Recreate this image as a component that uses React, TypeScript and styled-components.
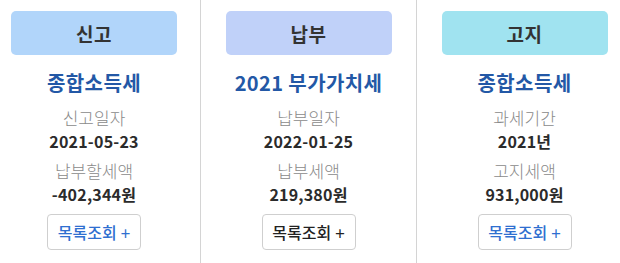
import { FunctionComponent } from "react";
import styled, { createGlobalStyle } from "styled-components";

const GlobalStyle = createGlobalStyle`
  html, body {
    margin: 0;
    padding: 0;
    background: #ffffff;
    overflow: hidden;
  }
  body {
    font-family: "Noto Sans CJK KR", "Noto Sans", sans-serif;
  }
`;

type Item = {
  tag: string;
  tagColor: string;
  title: string;
  dateLabel: string;
  dateValue: string;
  amountLabel: string;
  amountValue: string;
  linkColor: string;
  width: number;
};

const items: Item[] = [
  {
    tag: "신고",
    tagColor: "#b1d5fa",
    title: "종합소득세",
    dateLabel: "신고일자",
    dateValue: "2021-05-23",
    amountLabel: "납부할세액",
    amountValue: "-402,344원",
    linkColor: "#2f6fd0",
    width: 213,
  },
  {
    tag: "납부",
    tagColor: "#c0d1f9",
    title: "2021 부가가치세",
    dateLabel: "납부일자",
    dateValue: "2022-01-25",
    amountLabel: "납부세액",
    amountValue: "219,380원",
    linkColor: "#222222",
    width: 216,
  },
  {
    tag: "고지",
    tagColor: "#a0e3f0",
    title: "종합소득세",
    dateLabel: "과세기간",
    dateValue: "2021년",
    amountLabel: "고지세액",
    amountValue: "931,000원",
    linkColor: "#2f6fd0",
    width: 216,
  },
];

const Track = styled.div`
  display: flex;
  flex-direction: row;
  align-items: stretch;
  height: 263px;
  margin-left: -12px;
`;

const Column = styled.div<{ $width: number }>`
  flex: 0 0 ${(p) => p.$width}px;
  box-sizing: border-box;
  border-right: 1px solid #d4d4d4;
  display: flex;
  flex-direction: column;
  align-items: center;
  padding-top: 11px;
`;

const Tag = styled.div<{ $bg: string }>`
  width: 166px;
  height: 44px;
  border-radius: 5px;
  background: ${(p) => p.$bg};
  display: flex;
  align-items: center;
  justify-content: center;
  font-size: 19px;
  font-weight: 700;
  color: #333333;
  letter-spacing: 0.5px;
`;

const Title = styled.div`
  margin-top: 15px;
  font-size: 20px;
  font-weight: 700;
  color: #2358a6;
  line-height: 26px;
  letter-spacing: 0.4px;
`;

const Label = styled.div<{ $gap: number }>`
  margin-top: ${(p) => p.$gap}px;
  font-size: 17px;
  font-weight: 300;
  color: #8a8a8a;
  line-height: 23px;
`;

const Value = styled.div`
  font-size: 16px;
  font-weight: 700;
  color: #2b2b2b;
  line-height: 24px;
  letter-spacing: 0.2px;
`;

const ListButton = styled.button<{ $color: string }>`
  margin-top: 8px;
  width: 94px;
  height: 36px;
  border: 1px solid #cfcfcf;
  border-radius: 4px;
  background: #ffffff;
  color: ${(p) => p.$color};
  font-family: "Noto Sans CJK KR", "Noto Sans", sans-serif;
  font-size: 16px;
  font-weight: 500;
  padding: 0;
  cursor: pointer;
  display: flex;
  align-items: center;
  justify-content: center;
  gap: 4px;
`;

const Plus = styled.span`
  font-weight: 400;
  font-size: 17px;
`;

const SummaryCard: FunctionComponent<{ item: Item }> = ({ item }) => (
  <Column $width={item.width}>
    <Tag $bg={item.tagColor}>{item.tag}</Tag>
    <Title>{item.title}</Title>
    <Label $gap={10}>{item.dateLabel}</Label>
    <Value>{item.dateValue}</Value>
    <Label $gap={6}>{item.amountLabel}</Label>
    <Value>{item.amountValue}</Value>
    <ListButton $color={item.linkColor}>
      목록조회 <Plus>+</Plus>
    </ListButton>
  </Column>
);

const App: FunctionComponent = () => (
  <>
    <GlobalStyle />
    <Track>
      {items.map((item) => (
        <SummaryCard key={item.tag} item={item} />
      ))}
    </Track>
  </>
);

export default App;
